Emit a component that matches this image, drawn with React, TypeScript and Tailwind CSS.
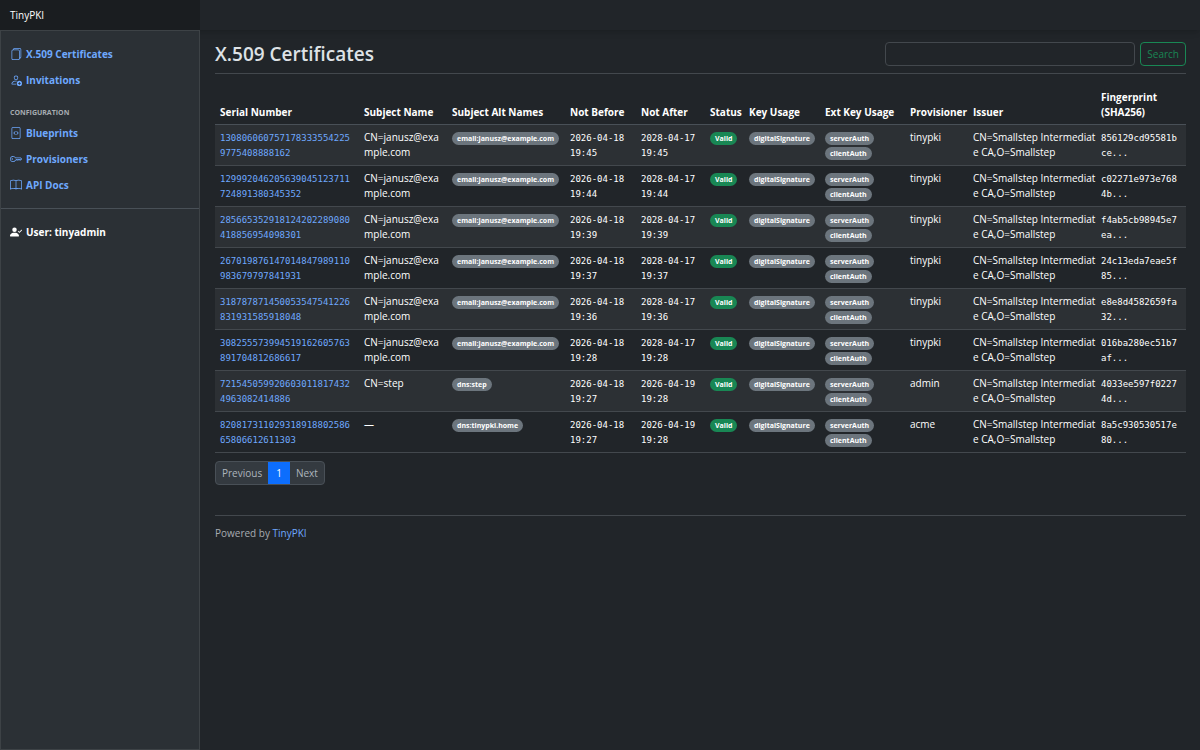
import React from 'react';
import { BsFiles, BsPersonAdd, BsFileCode, BsKey, BsBook, BsPersonCheckFill } from 'react-icons/bs';

interface Certificate {
  serial: string;
  subject: string;
  altName: string;
  notBefore: string;
  notAfter: string;
  provisioner: string;
  fingerprint: string;
}

const certificates: Certificate[] = [
  { serial: '1308060607571783335542259775408888162', subject: 'CN=janusz@example.com', altName: 'email:janusz@example.com', notBefore: '2026-04-18 19:45', notAfter: '2028-04-17 19:45', provisioner: 'tinypki', fingerprint: '856129cd95581bce...' },
  { serial: '129992046205639045123711724891380345352', subject: 'CN=janusz@example.com', altName: 'email:janusz@example.com', notBefore: '2026-04-18 19:44', notAfter: '2028-04-17 19:44', provisioner: 'tinypki', fingerprint: 'c02271e973e7684b...' },
  { serial: '285665352918124202289080418856954098301', subject: 'CN=janusz@example.com', altName: 'email:janusz@example.com', notBefore: '2026-04-18 19:39', notAfter: '2028-04-17 19:39', provisioner: 'tinypki', fingerprint: 'f4ab5cb98945e7ea...' },
  { serial: '267019876147014847989110983679797841931', subject: 'CN=janusz@example.com', altName: 'email:janusz@example.com', notBefore: '2026-04-18 19:37', notAfter: '2028-04-17 19:37', provisioner: 'tinypki', fingerprint: '24c13eda7eae5f85...' },
  { serial: '318787871450053547541226831931585918048', subject: 'CN=janusz@example.com', altName: 'email:janusz@example.com', notBefore: '2026-04-18 19:36', notAfter: '2028-04-17 19:36', provisioner: 'tinypki', fingerprint: 'e8e8d4582659fa32...' },
  { serial: '308255573994519162605763891704812686617', subject: 'CN=janusz@example.com', altName: 'email:janusz@example.com', notBefore: '2026-04-18 19:28', notAfter: '2028-04-17 19:28', provisioner: 'tinypki', fingerprint: '016ba280ec51b7af...' },
  { serial: '7215450599206030118174324963082414886', subject: 'CN=step', altName: 'dns:step', notBefore: '2026-04-18 19:27', notAfter: '2026-04-19 19:28', provisioner: 'admin', fingerprint: '4033ee597f02274d...' },
  { serial: '82081731102931891880258665806612611303', subject: '—', altName: 'dns:tinypki.home', notBefore: '2026-04-18 19:27', notAfter: '2026-04-19 19:28', provisioner: 'acme', fingerprint: '8a5c930530517e80...' }
];

const columns = [
  { name: 'Serial Number', width: 'w-[144px]' },
  { name: 'Subject Name', width: 'w-[88px]' },
  { name: 'Subject Alt Names', width: 'w-[118px]' },
  { name: 'Not Before', width: 'w-[71px]' },
  { name: 'Not After', width: 'w-[69px]' },
  { name: 'Status', width: 'w-[39px]' },
  { name: 'Key Usage', width: 'w-[76px]' },
  { name: 'Ext Key Usage', width: 'w-[85px]' },
  { name: 'Provisioner', width: 'w-[63px]' },
  { name: 'Issuer', width: 'w-[128px]' },
  { name: 'Fingerprint (SHA256)', width: 'w-[90px]' }
];

const mainLinks = [
  { name: 'X.509 Certificates', icon: BsFiles },
  { name: 'Invitations', icon: BsPersonAdd }
];

const configLinks = [
  { name: 'Blueprints', icon: BsFileCode },
  { name: 'Provisioners', icon: BsKey },
  { name: 'API Docs', icon: BsBook }
];

function NavLinks({ links }: { links: typeof mainLinks }) {
  return (
    <ul>
      {links.map(({ name, icon: Icon }) => (
        <li key={name}>
          <a href="#" className="flex items-center gap-1 px-[9px] h-[26px] font-bold text-[#6ea8fe]">
            <Icon size={12} />
            {name}
          </a>
        </li>
      ))}
    </ul>
  );
}

function Badge({ children, color = 'bg-[#6c757d]' }: { children: React.ReactNode; color?: string }) {
  return (
    <span className={`inline-block rounded-full px-[5px] py-[3px] text-[7px] leading-[7px] font-bold text-white whitespace-nowrap ${color}`}>
      {children}
    </span>
  );
}

function Mono({ children }: { children: React.ReactNode }) {
  return <span className="font-['DejaVu_Sans_Mono',monospace] text-[9px] leading-none">{children}</span>;
}

function App() {
  return (
    <div className="min-h-screen flex flex-col bg-[#212529] text-[#dee2e6] font-['Open_Sans','Noto_Sans',sans-serif] text-[10px] leading-[15px]">
      <header className="flex h-[30px] shadow-md">
        <a href="#" className="w-[200px] shrink-0 px-[10px] flex items-center bg-[#1a1d20] text-white">TinyPKI</a>
      </header>

      <div className="flex flex-1">
        {/* Sidebar */}
        <nav className="w-[200px] shrink-0 border border-[#3d4246] bg-[#2b3035]">
          <div className="pt-[10px]">
            <NavLinks links={mainLinks} />
          </div>
          <h6 className="px-[9px] mt-[13px] text-[7px] leading-[14px] font-bold uppercase text-[#a7acb1]">Configuration</h6>
          <NavLinks links={configLinks} />
          <hr className="my-[10px] border-[#495057]" />
          <div className="flex items-center gap-1 px-[9px] h-[26px] font-bold text-white">
            <BsPersonCheckFill size={12} />
            User: tinyadmin
          </div>
        </nav>

        <main className="flex-1 min-w-0 pl-[15px] pr-[14px] pt-3">
          <div className="flex items-center justify-between pb-[7px] mb-[10px] border-b border-[#43484d]">
            <h1 className="text-[19px] leading-6 font-semibold">X.509 Certificates</h1>
            <form className="flex gap-[5px]">
              <input type="search" aria-label="Search certificates" className="w-[250px] h-6 px-2 rounded border border-[#43484d] bg-[#212529]" />
              <button type="button" className="h-6 px-[6px] rounded border border-[#198754] text-[#198754]">Search</button>
            </form>
          </div>

          <table className="w-full table-fixed text-left text-white">
            <thead>
              <tr className="border-b border-[#495057] align-bottom">
                {columns.map((column) => (
                  <th key={column.name} className={`${column.width} px-[5px] pt-[6px] pb-1 font-bold`}>{column.name}</th>
                ))}
              </tr>
            </thead>
            <tbody>
              {certificates.map((cert) => (
                <tr key={cert.serial} className="border-b border-[#43484d] align-top odd:bg-[#2c3034]">
                  <td className="p-[5px] break-all">
                    <a href="#" className="text-[#6ea8fe]"><Mono>{cert.serial}</Mono></a>
                  </td>
                  <td className="p-[5px] break-all">{cert.subject}</td>
                  <td className="p-[5px]"><Badge>{cert.altName}</Badge></td>
                  <td className="p-[5px]"><Mono>{cert.notBefore}</Mono></td>
                  <td className="p-[5px]"><Mono>{cert.notAfter}</Mono></td>
                  <td className="p-[5px]"><Badge color="bg-[#198754]">Valid</Badge></td>
                  <td className="p-[5px]"><Badge>digitalSignature</Badge></td>
                  <td className="p-[5px]">
                    <Badge>serverAuth</Badge> <Badge>clientAuth</Badge>
                  </td>
                  <td className="p-[5px]">{cert.provisioner}</td>
                  <td className="py-[5px] pl-[5px] break-all">CN=Smallstep Intermediate CA,O=Smallstep</td>
                  <td className="p-[5px] break-all"><Mono>{cert.fingerprint}</Mono></td>
                </tr>
              ))}
            </tbody>
          </table>

          {/* Pagination */}
          <div className="mt-2 flex w-fit h-6 rounded border border-[#495057] bg-[#343a40] text-[#adb5bd] overflow-hidden">
            <button className="px-[6px]">Previous</button>
            <button className="px-2 bg-[#0d6efd] text-white">1</button>
            <button className="px-[6px]">Next</button>
          </div>

          <footer className="mt-[30px] pt-[10px] border-t border-[#43484d] text-[#a7acb1]">
            Powered by <a href="#" className="text-[#6ea8fe]">TinyPKI</a>
          </footer>
        </main>
      </div>
    </div>
  );
}

export default App;
